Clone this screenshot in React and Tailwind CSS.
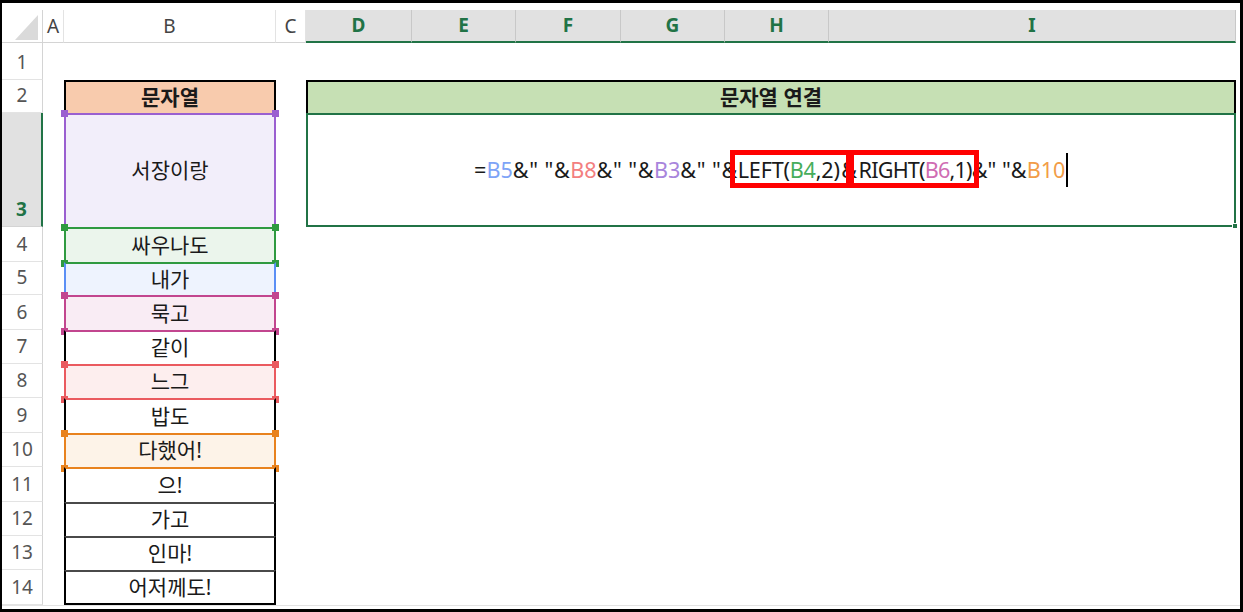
import React from "react";

const font = "font-['Noto_Sans','Noto_Sans_CJK_KR',sans-serif]";

const cols = [
  { l: "A", sel: false },
  { l: "B", sel: false },
  { l: "C", sel: false },
  { l: "D", sel: true },
  { l: "E", sel: true },
  { l: "F", sel: true },
  { l: "G", sel: true },
  { l: "H", sel: true },
  { l: "I", sel: true },
];

const rows = [
  { n: 1 },
  { n: 2, b: "문자열", cls: "bg-[#f8cbad] font-bold border-t-2 border-x-2 border-black", right: "title" },
  { n: 3, b: "서장이랑", cls: "bg-[#f2eefa] border-t-2 border-x-2 border-[#9a5fd0]", top: "bg-[#9a5fd0]", right: "formula", sel: true },
  { n: 4, b: "싸우나도", cls: "bg-[#ebf5ec] border-t-2 border-x-2 border-[#2f9a40]", top: "bg-[#2f9a40]", bot: "bg-[#2f9a40]" },
  { n: 5, b: "내가", cls: "bg-[#eef3fe] border-t-2 border-t-[#2f9a40] border-x-2 border-x-[#5b8ff5]" },
  { n: 6, b: "묵고", cls: "bg-[#f9ecf4] border-t-2 border-x-2 border-[#c2468f]", top: "bg-[#c2468f]", bot: "bg-[#c2468f]" },
  { n: 7, b: "같이", cls: "bg-white border-t-2 border-t-[#c2468f] border-x-2 border-x-black" },
  { n: 8, b: "느그", cls: "bg-[#fdeeee] border-t-2 border-x-2 border-[#ea5a5f]", top: "bg-[#ea5a5f]", bot: "bg-[#ea5a5f]" },
  { n: 9, b: "밥도", cls: "bg-white border-t-2 border-t-[#ea5a5f] border-x-2 border-x-black" },
  { n: 10, b: "다했어!", cls: "bg-[#fdf3e8] border-t-2 border-x-2 border-[#e8821e]", top: "bg-[#e8821e]", bot: "bg-[#e8821e]" },
  { n: 11, b: "으!", cls: "bg-white border-t-2 border-t-[#e8821e] border-x-2 border-x-black" },
  { n: 12, b: "가고", cls: "bg-white border-t-2 border-t-[#4a4a4a] border-x-2 border-x-black" },
  { n: 13, b: "인마!", cls: "bg-white border-t-2 border-t-[#4a4a4a] border-x-2 border-x-black" },
  { n: 14, b: "어저께도!", cls: "bg-white border-t-2 border-t-[#4a4a4a] border-x-2 border-b-2 border-x-black border-b-black" },
];

const Handles = ({ top, bot }) => (
  <>
    {top && <span className={`absolute -left-[5px] -top-[5px] w-[7px] h-[7px] ${top}`} />}
    {top && <span className={`absolute -right-[5px] -top-[5px] w-[7px] h-[7px] ${top}`} />}
    {bot && <span className={`absolute -left-[5px] -bottom-[5px] w-[7px] h-[7px] ${bot}`} />}
    {bot && <span className={`absolute -right-[5px] -bottom-[5px] w-[7px] h-[7px] ${bot}`} />}
  </>
);

const Formula = () => (
  <div className="whitespace-pre text-[21.6px] text-[#1a1a1a] leading-none flex items-center">
    <span>=</span>
    <span className="text-[#7ea4f7]">B5</span>
    <span className="tracking-[0.5px]">{'&" "&'}</span>
    <span className="text-[#f37f7f]">B8</span>
    <span className="tracking-[0.5px]">{'&" "&'}</span>
    <span className="text-[#a885dc]">B3</span>
    <span className="tracking-[0.5px]">{'&" "&'}</span>
    <span className="relative tracking-[-0.2px]">
      LEFT(<span className="text-[#47ad5b]">B4</span>,2)
      <span className="absolute -left-[8px] -right-[11px] -top-[9px] -bottom-[7px] border-[5px] border-[#ff0000]" />
    </span>
    <span className="mx-[1.5px]">&amp;</span>
    <span className="relative tracking-[-0.8px]">
      RIGHT(<span className="text-[#d06db3]">B6</span>,1)
      <span className="absolute -left-[10px] -right-[7px] -top-[9px] -bottom-[7px] border-[5px] border-[#ff0000]" />
    </span>
    <span>{'&" "&'}</span>
    <span className="text-[#f29d48]">B10</span>
    <span className="inline-block w-[1.5px] h-[34px] bg-black ml-[1px]" />
  </div>
);

export default function App() {
  return (
    <div className={`w-[1243px] h-[612px] bg-white border-t-[3px] border-l-2 border-r-[3px] border-b-[3px] border-black overflow-hidden ${font}`}>
      <div className="grid grid-cols-[41px_21px_212px_30px_106px_104px_105px_104px_104px_407px_1fr] grid-rows-[7px_33px_37px_33px_114px_35px_33px_35px_34px_34px_35px_34px_35px_34px_34px_35px_1fr] h-full">
        {/* strip above headers */}
        <div className="col-span-11 bg-white" />

        {/* column headers */}
        <div className="border-r border-r-[#d4d4d4] border-b border-b-[#d4d4d4] bg-white">
          <svg width="41" height="33" viewBox="0 0 41 33">
            <polygon points="36,5 36,30 13,30" fill="#dadada" />
          </svg>
        </div>
        {cols.map((c) =>
          c.sel ? (
            <div key={c.l} className="flex items-center justify-center bg-[#e1e1e1] border-r border-r-[#c8c8c8] border-b-2 border-b-[#217346] text-[19px] font-bold text-[#217346]">
              {c.l}
            </div>
          ) : (
            <div key={c.l} className="flex items-center justify-center bg-white border-r border-r-[#e3e3e3] border-b border-b-[#d4d4d4] text-[19px] text-[#444]">
              {c.l}
            </div>
          )
        )}
        <div className="bg-white" />

        {rows.map((r) => (
          <React.Fragment key={r.n}>
            <div
              className={
                r.sel
                  ? "flex items-end justify-center pb-[7px] leading-none bg-[#e1e1e1] border-r-2 border-r-[#217346] border-b border-b-[#d4d4d4] text-[19px] font-bold text-[#217346]"
                  : "flex items-end justify-center pb-[7px] leading-none bg-white border-r border-r-[#d4d4d4] border-b border-b-[#e3e3e3] text-[19px] text-[#555]"
              }
            >
              {r.n}
            </div>
            <div />
            {r.b ? (
              <div className={`relative flex items-center justify-center text-[21px] text-[#1a1a1a] ${r.cls}`}>
                {r.b}
                <Handles top={r.top} bot={r.bot} />
              </div>
            ) : (
              <div />
            )}
            <div />
            {r.right === "title" && (
              <div className="col-span-6 flex items-center justify-center bg-[#c6e0b4] border-t-2 border-x-2 border-black text-[21px] font-bold text-[#1a1a1a]">
                문자열 연결
              </div>
            )}
            {r.right === "formula" && (
              <div className="relative col-span-6 flex items-center justify-center border-2 border-[#217346]">
                <Formula />
                <span className="absolute -right-[4px] -bottom-[4px] w-[6px] h-[6px] bg-[#217346] border border-white" />
              </div>
            )}
            {r.right ? <div /> : <div className="col-span-7" />}
          </React.Fragment>
        ))}

        <div className="col-span-11 bg-white border-t border-t-[#e3e3e3]" />
      </div>
    </div>
  );
}
